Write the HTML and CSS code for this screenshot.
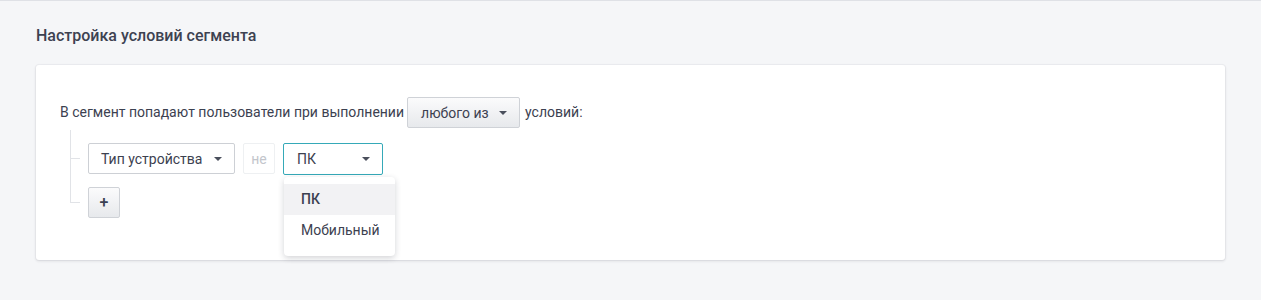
FILE: index.html
```html
<!DOCTYPE html>
<html lang="ru">
<head>
<meta charset="utf-8">
<link rel="stylesheet" href="styles.css">
</head>
<body>
<div class="page">
  <h2 class="title">Настройка условий сегмента</h2>
  <div class="card">
    <div class="lead">
      <span>В сегмент попадают пользователи при выполнении</span>
      <button class="btn btn-mode">любого из <span class="caret"></span></button>
      <span>условий:</span>
    </div>
    <div class="tree">
      <div class="branch">
        <div class="select select-field">Тип устройства <span class="caret"></span></div>
        <div class="neg">не</div>
        <div class="select-wrap">
          <div class="select select-value is-open">ПК <span class="caret"></span></div>
          <ul class="menu">
            <li class="menu-item is-active">ПК</li>
            <li class="menu-item">Мобильный</li>
          </ul>
        </div>
      </div>
      <div class="branch">
        <button class="btn btn-add">+</button>
      </div>
    </div>
  </div>
</div>
</body>
</html>
```
FILE: styles.css
```css
* { box-sizing: border-box; }
html, body { margin: 0; padding: 0; }
body {
  background: #f5f6f8;
  font-family: Roboto, "Liberation Sans", Arial, sans-serif;
  color: #3c4150;
  font-size: 14px;
  height: 300px;
  border-top: 1px solid #dfe1e6;
}
.page {
  padding: 25px 36px 0 36px;
}
.title {
  margin: 0 0 19px 0;
  font-size: 16px;
  line-height: 20px;
  font-weight: 500;
  color: #3d4251;
}
.card {
  width: 1189px;
  height: 195px;
  background: #fff;
  border-radius: 3px;
  box-shadow: 0 1px 3px rgba(40, 45, 60, 0.14), 0 0 0 1px rgba(40, 45, 60, 0.03);
  padding: 32px 24px 0 24px;
}
.lead {
  display: flex;
  align-items: center;
  gap: 3px;
  height: 31px;
  line-height: 31px;
}
.lead .btn-mode { margin-right: 2px; }
.btn {
  font-family: inherit;
  font-size: 14px;
  color: #3c4150;
  background: linear-gradient(#fbfbfc, #e7e9ec);
  border: 1px solid #cfd2d7;
  border-radius: 2px;
  height: 31px;
  padding: 0;
  display: inline-flex;
  align-items: center;
  cursor: pointer;
}
.btn-mode {
  width: 113px;
  padding-left: 13px;
  gap: 0;
}
.btn-mode .caret { margin-left: auto; margin-right: 12px; }
.caret {
  display: inline-block;
  width: 0;
  height: 0;
  border-left: 4px solid transparent;
  border-right: 4px solid transparent;
  border-top: 4px solid #4a4f5c;
}
.tree {
  position: relative;
  margin-top: 2px;
  padding: 13px 0 0 28px;
  display: flex;
  flex-direction: column;
  gap: 13px;
}
.tree::before {
  content: "";
  position: absolute;
  left: 10px;
  top: 0;
  bottom: 15px;
  width: 1px;
  background: #e1e3e7;
}
.branch {
  position: relative;
  display: flex;
  align-items: center;
  gap: 8px;
  height: 31px;
}
.branch::before {
  content: "";
  position: absolute;
  left: -18px;
  top: 15px;
  width: 10px;
  height: 1px;
  background: #e1e3e7;
}
.select {
  height: 31px;
  border: 1px solid #cdd0d5;
  border-radius: 2px;
  display: flex;
  align-items: center;
  background: #fff;
}
.select-field {
  width: 147px;
  padding-left: 12px;
}
.select-field .caret { margin-left: auto; margin-right: 12px; }
.neg {
  width: 32px;
  height: 31px;
  border: 1px solid #eef0f2;
  border-radius: 2px;
  color: #c3c6cc;
  display: flex;
  align-items: center;
  justify-content: center;
}
.select-wrap {
  position: relative;
}
.select-value {
  width: 100px;
  height: 32px;
  padding-left: 13px;
  border-color: #35a9b8;
}
.select-value .caret { margin-left: auto; margin-right: 12px; }
.menu {
  position: absolute;
  top: 34px;
  left: 1px;
  width: 111px;
  height: 79px;
  margin: 0;
  padding: 7px 0 0 0;
  list-style: none;
  background: #fff;
  border-radius: 4px;
  box-shadow: 0 2px 6px rgba(30, 35, 50, 0.2);
  z-index: 2;
}
.menu-item {
  height: 31px;
  line-height: 31px;
  padding-left: 17px;
  color: #3c4150;
}
.menu-item.is-active {
  background: #f2f2f4;
  font-weight: 500;
}
.btn-add {
  width: 32px;
  justify-content: center;
  font-size: 16px;
  font-weight: 500;
  color: #3a4052;
}
```
